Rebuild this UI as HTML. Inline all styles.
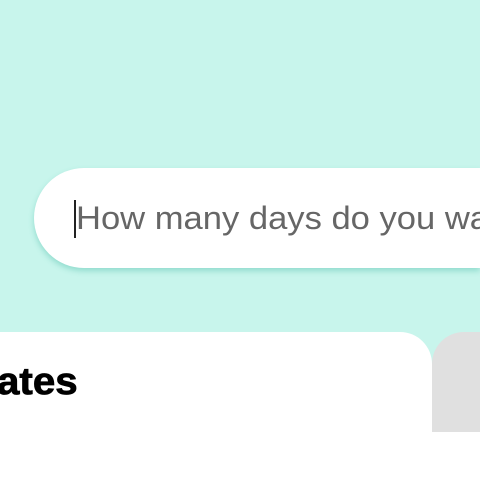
<!DOCTYPE html>
<html><head><style>
html,body{margin:0;padding:0;width:480px;height:480px;overflow:hidden;background:#fff;font-family:"Liberation Sans",sans-serif;}
.wrap{position:relative;width:480px;height:480px;overflow:hidden;}
.top{position:absolute;left:0;top:0;width:480px;height:400px;background:#c8f5ec;}
.bot{position:absolute;left:0;top:432px;width:480px;height:48px;background:#fff;}
.inp{position:absolute;left:34px;top:168px;width:446px;height:100px;border-radius:50px 0 0 50px;background:#fff;box-shadow:0 3px 6px rgba(80,190,170,.45);}
.txt{position:absolute;left:76px;top:200px;width:404px;overflow:hidden;font-size:32px;color:#666;white-space:nowrap;}
.txt span{display:inline-block;transform:scaleX(1.08);transform-origin:left top;}
.cur{position:absolute;left:74px;top:200px;width:2px;height:38px;background:#222;}
.card{position:absolute;left:0;top:332px;width:432px;height:100px;background:#fff;border-top-right-radius:32px;}
.gray{position:absolute;left:432px;top:332px;width:48px;height:100px;background:#e0e0e0;border-top-left-radius:32px;}
.ates{position:absolute;left:-3px;top:361px;font-size:38px;font-weight:900;color:#000;transform:scaleX(1.06);transform-origin:left top;-webkit-text-stroke:0.8px #000;}
</style></head><body><div class="wrap">
<div class="top"></div>
<div class="bot"></div>
<div class="inp"></div>
<div class="txt"><span>How many days do you want</span></div>
<div class="cur"></div>
<div class="gray"></div>
<div class="card"></div>
<div class="ates">ates</div>
</div></body></html>
